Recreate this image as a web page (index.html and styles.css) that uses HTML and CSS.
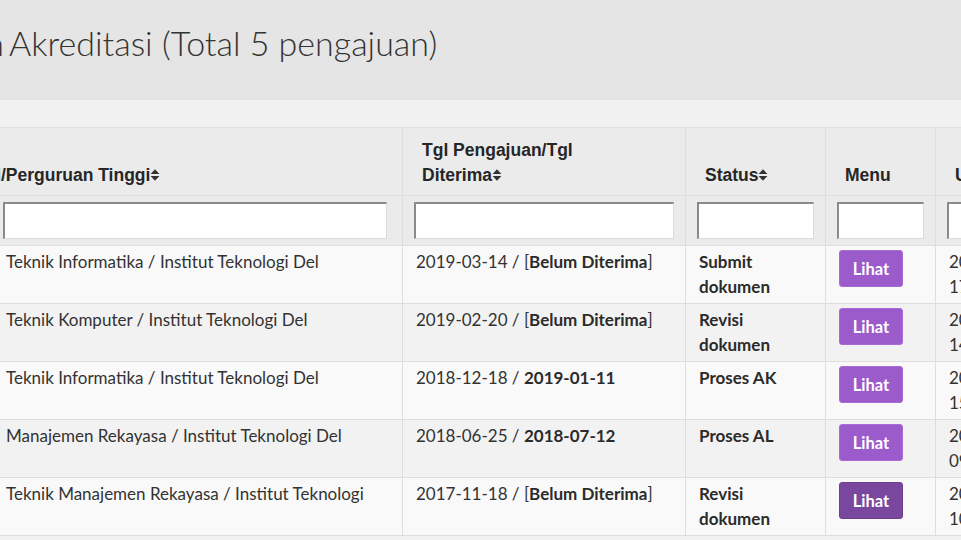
FILE: index.html
```html
<!DOCTYPE html>
<html lang="id">
<head>
<meta charset="utf-8">
<title>Daftar Pengajuan Akreditasi</title>
<link rel="stylesheet" href="styles.css">
</head>
<body>
<div class="page">
  <header class="title-band">
    <h1 class="title"><span class="cut">Daftar Pengajuan</span> Akreditasi (Total 5 pengajuan)</h1>
  </header>
  <div class="sub-band"></div>
  <table class="grid">
    <colgroup>
      <col class="c1"><col class="c2"><col class="c3"><col class="c4"><col class="c5">
    </colgroup>
    <thead>
      <tr class="head-row">
        <th class="first"><span class="cut">Program Studi</span><span class="nw">/Perguruan Tinggi<svg class="sort" viewBox="0 0 10 14"><path d="M0.6 6h8.8L5 1.2z M0.6 8h8.8L5 12.8z"/></svg></span></th>
        <th>Tgl Pengajuan/Tgl <span class="nw">Diterima<svg class="sort" viewBox="0 0 10 14"><path d="M0.6 6h8.8L5 1.2z M0.6 8h8.8L5 12.8z"/></svg></span></th>
        <th><span class="nw">Status<svg class="sort" viewBox="0 0 10 14"><path d="M0.6 6h8.8L5 1.2z M0.6 8h8.8L5 12.8z"/></svg></span></th>
        <th>Menu</th>
        <th>Update Terakhir</th>
      </tr>
      <tr class="filter-row">
        <td class="first"><input class="filter" type="text"></td>
        <td><input class="filter" type="text"></td>
        <td><input class="filter" type="text"></td>
        <td><input class="filter" type="text"></td>
        <td><input class="filter" type="text"></td>
      </tr>
    </thead>
    <tbody>
      <tr>
        <td class="first">Teknik Informatika / Institut Teknologi Del</td>
        <td>2019-03-14 / [<b>Belum Diterima</b>]</td>
        <td><b>Submit dokumen</b></td>
        <td><button class="btn">Lihat</button></td>
        <td>2019-03-14<br>17:20:11</td>
      </tr>
      <tr>
        <td class="first">Teknik Komputer / Institut Teknologi Del</td>
        <td>2019-02-20 / [<b>Belum Diterima</b>]</td>
        <td><b>Revisi dokumen</b></td>
        <td><button class="btn">Lihat</button></td>
        <td>2019-02-21<br>14:05:37</td>
      </tr>
      <tr>
        <td class="first">Teknik Informatika / Institut Teknologi Del</td>
        <td>2018-12-18 / <b>2019-01-11</b></td>
        <td><b>Proses AK</b></td>
        <td><button class="btn">Lihat</button></td>
        <td>2019-01-11<br>15:42:08</td>
      </tr>
      <tr>
        <td class="first">Manajemen Rekayasa / Institut Teknologi Del</td>
        <td>2018-06-25 / <b>2018-07-12</b></td>
        <td><b>Proses AL</b></td>
        <td><button class="btn">Lihat</button></td>
        <td>2018-07-12<br>09:13:54</td>
      </tr>
      <tr>
        <td class="first">Teknik Manajemen Rekayasa / Institut Teknologi</td>
        <td>2017-11-18 / [<b>Belum Diterima</b>]</td>
        <td><b>Revisi dokumen</b></td>
        <td><button class="btn btn-active">Lihat</button></td>
        <td>2017-11-20<br>10:31:45</td>
      </tr>
    </tbody>
  </table>
</div>
</body>
</html>
```
FILE: styles.css
```css
html, body {
  margin: 0;
  padding: 0;
  overflow: hidden;
  background: #f1f1f1;
}

.page {
  font-family: Lato, "Liberation Sans", sans-serif;
  color: #333;
}

.cut {
  display: inline-block;
  width: 0;
  direction: rtl;
  white-space: nowrap;
}

.nw {
  white-space: nowrap;
}

.title-band {
  background: #e5e5e5;
  height: 100px;
  box-sizing: border-box;
  padding: 23px 0 0 4px;
}

.title {
  margin: 0;
  font-family: Lato, sans-serif;
  font-weight: 300;
  font-size: 34px;
  line-height: 40px;
  color: #333;
  white-space: nowrap;
}

.title .cut {
  margin-right: -3px;
}

.sub-band {
  height: 27px;
  background: #f1f1f1;
}

.grid {
  margin-left: -9px;
  border-collapse: collapse;
  table-layout: fixed;
  width: 1144px;
}

.c1 { width: 411px; }
.c2 { width: 283px; }
.c3 { width: 140px; }
.c4 { width: 110px; }
.c5 { width: 200px; }

.grid th,
.grid td {
  border: 1px solid #dedede;
}

.head-row th {
  background: #ebebeb;
  font-family: "Liberation Sans", Arial, sans-serif;
  font-weight: bold;
  font-size: 17.5px;
  line-height: 25px;
  color: #262626;
  text-align: left;
  vertical-align: bottom;
  padding: 10px 34px 7px 19px;
}

.head-row th.first {
  padding-left: 9px;
}

.sort {
  width: 10px;
  height: 14px;
  fill: #333;
  vertical-align: -1px;
}

.filter-row td {
  background: #ebebeb;
  padding: 6px 11px 6px 11px;
}

.filter-row td.first {
  padding-right: 15px;
}

.filter {
  display: block;
  width: 100%;
  height: 37px;
  box-sizing: border-box;
  background: #fff;
  border-style: solid;
  border-width: 2px 1px 1px 2px;
  border-color: #8a8a8a #dcdcdc #dcdcdc #8a8a8a;
  margin: 0;
  padding: 0 4px;
}

tbody td {
  font-size: 17px;
  line-height: 25px;
  vertical-align: top;
  padding: 3px 13px 4px 13px;
  background: #f9f9f9;
}

tbody tr:nth-child(even) td {
  background: #f2f2f2;
}

tbody td.first {
  padding-left: 14px;
  padding-right: 16px;
}

tbody b {
  font-weight: bold;
  color: #2b2b2b;
}

.btn {
  display: block;
  width: 64px;
  height: 37px;
  margin-top: 1px;
  border: 1px solid #a86bd6;
  border-radius: 3px;
  background: #9b5bcb;
  color: #fff;
  font-family: Lato, sans-serif;
  font-weight: bold;
  font-size: 16.5px;
  padding: 0;
}

.btn-active {
  background: #7a479f;
  border-color: #6e3f90;
}
```
